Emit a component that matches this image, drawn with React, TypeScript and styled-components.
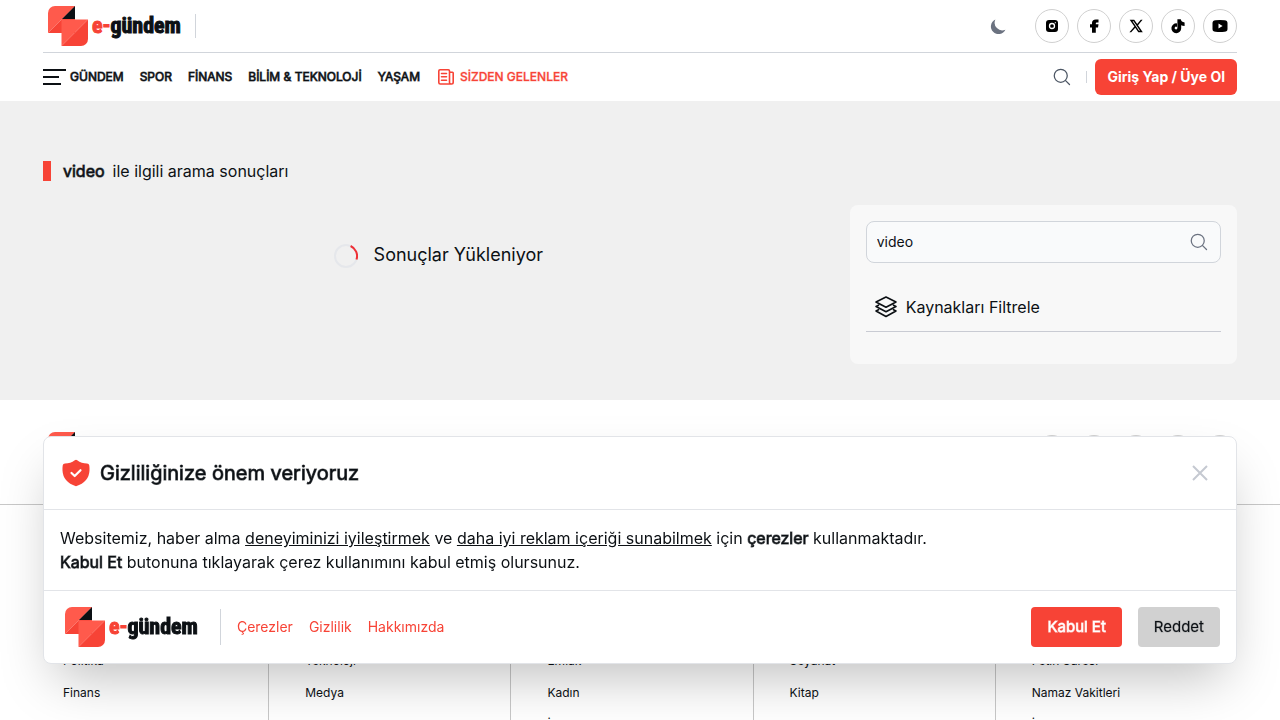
import React from "react";
import styled, { createGlobalStyle } from "styled-components";

const colors = {
  red: "#f74336",
  ink: "#0c1014",
  line: "#d1d5db",
  grey: "#6b7280",
};

const GlobalStyle = createGlobalStyle`
  *, *::before, *::after { box-sizing: border-box; }
  body {
    margin: 0;
    background: #fff;
    color: ${colors.ink};
    font-family: Inter, "Liberation Sans", sans-serif;
    font-size: 16px;
    line-height: 24px;
  }
  a { color: inherit; text-decoration: none; }
  button { font: inherit; border: 0; background: none; padding: 0; cursor: pointer; color: inherit; }
  h1, h2, p, ul { margin: 0; padding: 0; font: inherit; }
  ul { list-style: none; }
  svg { display: block; flex: none; }
`;

const Container = styled.div`
  padding: 0 43px;
`;

const Strong = styled.strong`
  font-weight: 400;
  -webkit-text-stroke: 1px rgba(12, 16, 20, 0.7);
`;

const TopRow = styled.div`
  display: flex;
  align-items: center;
  height: 53px;
  border-bottom: 1px solid ${colors.line};
`;

const LogoLink = styled.a`
  display: flex;
  align-items: center;
  gap: 4px;
  padding: 0 6px 0 5px;
`;

const LogoWord = styled.span`
  font-family: "Liberation Sans Narrow", "Roboto Condensed", "DejaVu Sans Condensed", sans-serif;
  font-weight: 700;
  font-size: 22px;
  line-height: 32px;
  color: ${colors.ink};
  -webkit-text-stroke: 1px currentColor;

  em {
    font-style: normal;
    color: ${colors.red};
  }
`;

const Divider = styled.span<{ $height: number; $space: number }>`
  width: 1px;
  height: ${(p) => p.$height}px;
  margin: 0 ${(p) => p.$space}px;
  background: ${colors.line};
`;

const IconButton = styled.button<{ $color?: string }>`
  display: flex;
  align-items: center;
  justify-content: center;
  color: ${(p) => p.$color ?? colors.ink};
`;

const TopActions = styled.div`
  display: flex;
  align-items: center;
  gap: 27px;
  margin-left: auto;
`;

const SocialList = styled.ul`
  display: flex;
  gap: 8px;
`;

const SocialLink = styled.a`
  display: flex;
  align-items: center;
  justify-content: center;
  width: 34px;
  height: 34px;
  border: 1px solid #d0d0d0;
  border-radius: 50%;
  color: #000;
`;

const NavRow = styled.nav`
  display: flex;
  align-items: center;
  height: 48px;
`;

const NavList = styled.ul`
  display: flex;
  align-items: center;
  gap: 16px;
  margin-left: 4px;
`;

const NavLink = styled.a<{ $accent?: boolean }>`
  display: flex;
  align-items: center;
  gap: 4px;
  font-size: 12px;
  font-weight: ${(p) => (p.$accent ? 500 : 400)};
  line-height: 16px;
  color: ${(p) => (p.$accent ? colors.red : colors.ink)};
  -webkit-text-stroke: 1px ${(p) => (p.$accent ? "rgba(247, 67, 54, 0.3)" : "rgba(12, 16, 20, 0.7)")};
`;

const NavActions = styled.div`
  display: flex;
  align-items: center;
  margin-left: auto;
`;

const NavSearch = styled(IconButton)`
  margin-right: 6px;
`;

const LoginButton = styled.button`
  height: 36px;
  padding: 0 12px;
  border-radius: 6px;
  background: ${colors.red};
  color: #fff;
  font-size: 14px;
  font-weight: 700;
`;

const Main = styled.main`
  padding: 60px 43px 36px;
  background: #f0f0f0;
`;

const Heading = styled.h1`
  display: flex;
  align-items: center;
  gap: 8px;
  margin-bottom: 24px;
  line-height: 20px;

  &::before {
    content: "";
    width: 8px;
    height: 20px;
    margin-right: 4px;
    background: ${colors.red};
  }
`;

const Columns = styled.div`
  display: grid;
  grid-template-columns: repeat(3, 1fr);
  gap: 16px;
`;

const Loading = styled.div`
  grid-column: span 2;
  display: flex;
  justify-content: center;
  align-items: center;
  align-self: start;
  gap: 16px;
  padding-top: 36px;
  font-size: 18px;
  line-height: 28px;
`;

const Panel = styled.aside`
  padding: 16px 16px 32px;
  border-radius: 8px;
  background: #f8f8f8;
`;

const SearchBox = styled.form`
  display: flex;
  align-items: center;
  height: 42px;
  padding: 0 11px 0 10px;
  border: 1px solid ${colors.line};
  border-radius: 8px;
  background: #f9fafb;
`;

const SearchInput = styled.input`
  flex: 1;
  min-width: 0;
  padding: 0;
  border: 0;
  outline: 0;
  background: none;
  color: ${colors.ink};
  font: inherit;
  font-size: 14px;
`;

const FilterButton = styled.button`
  display: flex;
  align-items: center;
  gap: 8px;
  width: 100%;
  height: 49px;
  margin-top: 20px;
  padding: 0 8px;
  border-bottom: 1px solid #c9cbd3;
`;

const FooterTop = styled.div`
  display: flex;
  align-items: center;
  justify-content: space-between;
  padding: 32px 43px;
  border-bottom: 1px solid #c8c8c8;
`;

const FooterColumns = styled.div`
  display: flex;
  padding: 0 43px 0 27px;
`;

const FooterColumn = styled.ul`
  flex: 1;
  padding: 140px 0 0 36px;
  border-right: 1px solid #c8c8c8;
  font-size: 12px;
  line-height: 32px;

  &:last-child { border-right: 0; }
`;

const Consent = styled.section`
  position: fixed;
  left: 43px;
  right: 43px;
  bottom: 56px;
  border: 1px solid #e2e4e8;
  border-radius: 8px;
  background: #fff;
  box-shadow: 0 25px 50px -12px rgba(0, 0, 0, 0.25);
`;

const ConsentHeader = styled.header`
  display: flex;
  align-items: center;
  gap: 8px;
  height: 73px;
  padding: 0 24px 0 16px;
  border-bottom: 1px solid #e2e4e8;
`;

const ConsentTitle = styled.h2`
  flex: 1;
  font-size: 20px;
  line-height: 28px;
`;

const ConsentText = styled.p`
  padding: 16px;

  a { text-decoration: underline; }
`;

const ConsentFooter = styled.footer`
  display: flex;
  align-items: center;
  gap: 16px;
  padding: 16px;
  border-top: 1px solid #e2e4e8;
`;

const ConsentLinks = styled.ul`
  display: flex;
  flex: 1;
  gap: 16px;
  font-size: 14px;
  line-height: 20px;
  color: ${colors.red};
`;

const ConsentButton = styled.button<{ $primary?: boolean }>`
  height: 40px;
  padding: 0 16px;
  border-radius: 4px;
  font-size: 15px;
  background: ${(p) => (p.$primary ? colors.red : "#d1d1d1")};
  color: ${(p) => (p.$primary ? "#fff" : colors.ink)};
  -webkit-text-stroke: 1px ${(p) => (p.$primary ? "rgba(255, 255, 255, 0.7)" : "rgba(12, 16, 20, 0.2)")};
`;

const Logo = () => (
  <LogoLink href="#" aria-label="e-gündem">
    <svg width="40" height="40" viewBox="0 0 40 40">
      <path d="M7 0H27L0 27V7A7 7 0 0 1 7 0Z" fill="#ff5a4c" />
      <path d="M27 0V27H0Z" fill="#f74336" />
      <path d="M27 0V13H14Z" fill="#0c1014" />
      <path d="M13.500 13.500H40L13.500 40Z" fill="#ff5a4c" />
      <path d="M40 13.500V33A7 7 0 0 1 33 40H13.500Z" fill="#f74336" />
    </svg>
    <LogoWord>
      <em>e-</em>gündem
    </LogoWord>
  </LogoLink>
);

const SearchIcon = ({ color }: { color: string }) => (
  <svg width="20" height="20" viewBox="0 0 24 24" fill="none" stroke={color} strokeWidth="1.500" strokeLinecap="round">
    <circle cx="10.500" cy="10.500" r="7.800" />
    <path d="M16.300 16.300L21 21" />
  </svg>
);

const socials = [
  {
    name: "Instagram",
    art: (
      <>
        <rect x="2" y="2" width="12" height="12" rx="3" />
        <circle cx="8" cy="8" r="2.500" fill="none" stroke="#fff" strokeWidth="1.300" />
        <circle cx="11.300" cy="4.700" r="0.600" fill="#fff" />
      </>
    ),
  },
  {
    name: "Facebook",
    art: <path d="M12.500 1.500V4.500H10.700Q9.800 4.500 9.800 5.400V6.300H12.500L12 9.500H9.800V14.800H6V9.500H4V6.300H6V5Q6 1.500 9.900 1.500Z" />,
  },
  {
    name: "X",
    art: (
      <path
        fillRule="evenodd"
        d="M1.700 1.800H6.200L9.200 6L12.800 1.800H14.600L10 7.200L14.800 14.200H10.300L7.200 9.800L3.200 14.200H1.400L6.400 8.500ZM4.500 3.200L11 12.800H12L5.500 3.200Z"
      />
    ),
  },
  {
    name: "TikTok",
    art: <path d="M7.400 1.300H10.800Q11.200 4 14.600 4.400V8Q12.500 8 11.200 7.200V10.200A4.900 4.900 0 1 1 7 5.400V8.900A1.400 1.400 0 1 0 7.400 10.300Z" />,
  },
  {
    name: "YouTube",
    art: (
      <path
        fillRule="evenodd"
        d="M3.500 2.200Q8 1.800 12.500 2.200Q15.500 2.400 15.500 5V11Q15.500 13.600 12.500 13.800Q8 14.200 3.500 13.800Q0.500 13.600 0.500 11V5Q0.500 2.400 3.500 2.200ZM6.500 5.400V10.600L10.600 8Z"
      />
    ),
  },
];

const Socials = () => (
  <SocialList>
    {socials.map((s) => (
      <li key={s.name}>
        <SocialLink href="#" aria-label={s.name}>
          <svg width="16" height="16" viewBox="0 0 16 16" fill="currentColor">
            {s.art}
          </svg>
        </SocialLink>
      </li>
    ))}
  </SocialList>
);

const navItems = ["GÜNDEM", "SPOR", "FİNANS", "BİLİM & TEKNOLOJİ", "YAŞAM"];

const footerLinks = [
  ["Politika", "Finans"],
  ["Teknoloji", "Medya"],
  ["Emlak", "Kadın", "İş"],
  ["Seyahat", "Kitap"],
  ["Fetih Suresi", "Namaz Vakitleri", "İmsak"],
];

export default function App() {
  return (
    <>
      <GlobalStyle />
      <header>
        <Container>
          <TopRow>
            <Logo />
            <Divider $height={24} $space={8} />
            <TopActions>
              <IconButton type="button" aria-label="Koyu tema" $color={colors.grey}>
                <svg width="19" height="19" viewBox="0 0 20 20" fill="currentColor">
                  <path d="M17.293 13.293A8 8 0 0 1 6.707 2.707a8.001 8.001 0 1 0 10.586 10.586z" />
                </svg>
              </IconButton>
              <Socials />
            </TopActions>
          </TopRow>
          <NavRow>
            <IconButton type="button" aria-label="Menü">
              <svg width="23" height="16" viewBox="0 0 23 16" fill="currentColor">
                <path d="M0 0H23V2H0ZM0 7H16V9H0ZM0 14H18V16H0Z" />
              </svg>
            </IconButton>
            <NavList>
              {navItems.map((item) => (
                <li key={item}>
                  <NavLink href="#">{item}</NavLink>
                </li>
              ))}
              <li>
                <NavLink href="#" $accent>
                  <svg width="20" height="20" viewBox="0 0 20 20" fill="none" stroke="currentColor" strokeWidth="1.600" strokeLinecap="round" strokeLinejoin="round">
                    <path d="M13.500 15.500V4Q13.500 2.800 12.300 2.800H4Q2.800 2.800 2.800 4V15.500Q2.800 17 4.300 17H15.500Q17.200 17 17.200 15.300V6Q17.200 5.300 16.500 5.300H13.500M13.500 15.500Q13.500 17 15 17M5.500 6.500H10.500M5.500 9.800H10.500M5.500 13.200H10.500" />
                  </svg>
                  SİZDEN GELENLER
                </NavLink>
              </li>
            </NavList>
            <NavActions>
              <NavSearch type="button" aria-label="Ara">
                <SearchIcon color="#4b5563" />
              </NavSearch>
              <Divider $height={12} $space={8} />
              <LoginButton type="button">Giriş Yap / Üye Ol</LoginButton>
            </NavActions>
          </NavRow>
        </Container>
      </header>

      <Main>
        <Heading>
          <Strong>video</Strong>
          <span>ile ilgili arama sonuçları</span>
        </Heading>
        <Columns>
          <Loading role="status">
            <svg width="24" height="26" viewBox="0 -2 24 26" fill="none" strokeWidth="2">
              <circle cx="12" cy="12" r="11" stroke="#e5e7eb" />
              <path d="M16.600 2A11 11 0 0 1 22.500 15.500" stroke="#ee2f35" />
            </svg>
            Sonuçlar Yükleniyor
          </Loading>
          <Panel>
            <SearchBox onSubmit={(e) => e.preventDefault()}>
              <SearchInput type="text" aria-label="Ara" defaultValue="video" />
              <IconButton type="submit" aria-label="Ara">
                <SearchIcon color={colors.grey} />
              </IconButton>
            </SearchBox>
            <FilterButton type="button">
              <svg width="24" height="24" viewBox="0 0 24 24" fill="none" stroke="currentColor" strokeWidth="1.600" strokeLinejoin="round" strokeLinecap="round">
                <path d="M12 2L22 7L12 12.200L2 7ZM4.500 10.200L2 11.500L12 16.700L22 11.500L19.500 10.200M4.500 14.700L2 16L12 21.500L22 16L19.500 14.700" />
              </svg>
              Kaynakları Filtrele
            </FilterButton>
          </Panel>
        </Columns>
      </Main>

      <footer>
        <FooterTop>
          <Logo />
          <Socials />
        </FooterTop>
        <FooterColumns>
          {footerLinks.map((links) => (
            <FooterColumn key={links[0]}>
              {links.map((link) => (
                <li key={link}>
                  <a href="#">{link}</a>
                </li>
              ))}
            </FooterColumn>
          ))}
        </FooterColumns>
      </footer>

      <Consent role="dialog" aria-labelledby="consent-title">
        <ConsentHeader>
          <svg width="32" height="32" viewBox="0 0 32 32">
            <path d="M14.800 3.300Q16 2.300 17.200 3.300Q21.500 6.500 27 6.500Q29 6.500 29.300 8.500Q29.600 10.500 29.500 13.500Q29 25 16 29.200Q3 25 2.500 13.500Q2.400 10.500 2.700 8.500Q3 6.500 5 6.500Q10.500 6.500 14.800 3.300Z" fill={colors.red} />
            <path d="M11.500 16L14.700 19L20.500 13.200" fill="none" stroke="#fff" strokeWidth="2.200" strokeLinecap="round" strokeLinejoin="round" />
          </svg>
          <ConsentTitle id="consent-title">
            <Strong>Gizliliğinize önem veriyoruz</Strong>
          </ConsentTitle>
          <IconButton type="button" aria-label="Kapat" $color="#c5c9d1">
            <svg width="24" height="24" viewBox="0 0 24 24" fill="none" stroke="currentColor" strokeWidth="2">
              <path d="M5 5L19 19M19 5L5 19" />
            </svg>
          </IconButton>
        </ConsentHeader>
        <ConsentText>
          Websitemiz, haber alma <a href="#">deneyiminizi iyileştirmek</a> ve{" "}
          <a href="#">daha iyi reklam içeriği sunabilmek</a> için <Strong>çerezler</Strong> kullanmaktadır.
          <br />
          <Strong>Kabul Et</Strong> butonuna tıklayarak çerez kullanımını kabul etmiş olursunuz.
        </ConsentText>
        <ConsentFooter>
          <Logo />
          <Divider $height={36} $space={0} />
          <ConsentLinks>
            <li><a href="#">Çerezler</a></li>
            <li><a href="#">Gizlilik</a></li>
            <li><a href="#">Hakkımızda</a></li>
          </ConsentLinks>
          <ConsentButton type="button" $primary>Kabul Et</ConsentButton>
          <ConsentButton type="button">Reddet</ConsentButton>
        </ConsentFooter>
      </Consent>
    </>
  );
}
